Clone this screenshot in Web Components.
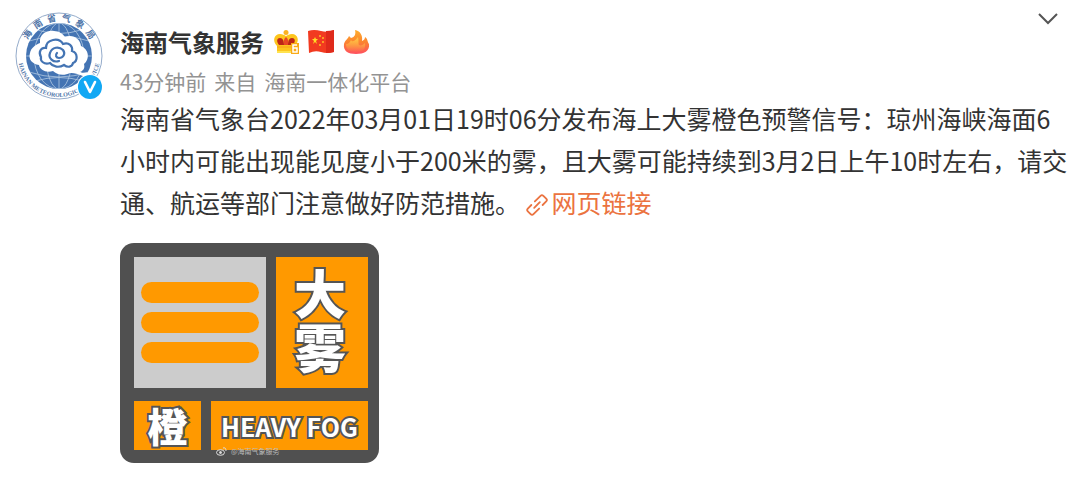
<!DOCTYPE html>
<html lang="zh-CN">
<head>
  <meta charset="utf-8">
  <meta name="viewport" content="width=device-width, initial-scale=1">
  <title>海南气象服务</title>
  <style>
    body {
      margin: 0;
      background: #fff;
      color: #333;
      font-family: "Noto Sans CJK SC", sans-serif;
    }
  </style>
</head>
<body>
  <feed-post>
    <user-avatar slot="avatar"></user-avatar>
    <post-header slot="header" name="海南气象服务" time="43分钟前" source="海南一体化平台"></post-header>
    海南省气象台2022年03月01日19时06分发布海上大雾橙色预警信号：琼州海峡海面6小时内可能出现能见度小于200米的雾，且大雾可能持续到3月2日上午10时左右，请交通、航运等部门注意做好防范措施。
    <web-link>网页链接</web-link>
    <fog-warning slot="media"></fog-warning>
  </feed-post>

  <script>
    class FeedPost extends HTMLElement {
      constructor() {
        super();
        this.attachShadow({ mode: 'open' });

        this.shadowRoot.innerHTML = `
          <style>
            :host {
              display: block;
            }

            article {
              display: grid;
              grid-template-columns: 88px minmax(0, 1fr);
              column-gap: 17px;
              padding: 12px 8px 20px 15px;
            }

            p {
              margin: 0 0 20px;
              font-size: 25px;
              line-height: 42px;
            }
          </style>

          <article>
            <slot name="avatar"></slot>
            <div>
              <slot name="header"></slot>
              <p><slot></slot></p>
              <slot name="media"></slot>
            </div>
          </article>
        `;
      }
    }

    class UserAvatar extends HTMLElement {
      constructor() {
        super();
        this.attachShadow({ mode: 'open' });

        this.shadowRoot.innerHTML = `
          <style>
            :host {
              display: block;
              position: relative;
              width: 88px;
              height: 88px;
            }

            svg {
              display: block;
              overflow: visible;
            }

            .verified {
              position: absolute;
              right: 0;
              bottom: 0;
            }

            text {
              fill: #4f75a8;
              font-weight: 700;
            }

            .cn {
              font-size: 9px;
            }

            .en {
              font-family: "Liberation Serif", serif;
              font-size: 6px;
            }
          </style>

          <svg width="88" height="88" viewBox="0 0 88 88" role="img" aria-label="海南省气象局">
            <defs>
              <path id="top" d="M9 44A35 35 0 0 1 79 44"/>
              <path id="bottom" d="M3 44A41 41 0 0 0 85 44"/>
              <clipPath id="disc"><circle cx="44" cy="44" r="33"/></clipPath>
            </defs>
            <circle cx="44" cy="44" r="43" fill="#fff" stroke="#7896bd" stroke-width=".8"/>
            <circle cx="44" cy="44" r="33" fill="#4474b3"/>
            <g clip-path="url(#disc)" fill="none" stroke="#b4cae2" stroke-width=".8">
              <path d="M44 10v68M10 44h68M14 29q30-10 60 0M14 60q30 10 60 0M22 18q22 7 44 0M20 69q24-7 48 0"/>
              <ellipse cx="44" cy="44" rx="13" ry="33"/>
              <ellipse cx="44" cy="44" rx="25" ry="33"/>
            </g>
            <path fill="#fff" d="M25 31C24 22 32 18 39 19c5 0 9 3 11 6 7-3 15 1 16 9 8 3 9 13 3 18 1 4 0 6-4 8 5 2 10 0 18-2l-3 8c-12 0-18-6-25-5-6 3-13 2-17-2-7 2-13-1-14-6-7-1-11-6-9-12 1-5 5-8 10-10Z"/>
            <g fill="none" stroke="#4474b3" stroke-width="2.200" stroke-linecap="round">
              <path d="M49 53c-5 3-11 2-14-2-6 2-10-2-9-6-3-5 0-10 5-9 0-9 13-11 17-4 6-2 10 2 9 7 6 2 6 10 1 12-1 4-5 5-9 2"/>
              <path d="M44 49c-6 2-11-3-9-8 2-6 9-7 13-3 3 4 0 8-4 8-3 0-4-3-2-5"/>
            </g>
            <text class="cn"><textPath href="#top" startOffset="50%" text-anchor="middle">海&ensp;南&ensp;省&ensp;气&ensp;象&ensp;局</textPath></text>
            <text class="en"><textPath href="#bottom" startOffset="50%" text-anchor="middle">HAINAN METEOROLOGICAL SERVICE</textPath></text>
          </svg>
          <svg class="verified" width="26" height="26" viewBox="0 0 26 26" role="img" aria-label="认证">
            <circle cx="13" cy="13" r="13" fill="#fff"/>
            <circle cx="13" cy="13" r="12" fill="#12a8f4"/>
            <path d="m8 8 5 10 5-10" fill="none" stroke="#fff" stroke-width="2.600" stroke-linecap="round" stroke-linejoin="round"/>
          </svg>
        `;
      }
    }

    class PostHeader extends HTMLElement {
      constructor() {
        super();
        this.attachShadow({ mode: 'open' });

        this.shadowRoot.innerHTML = `
          <style>
            :host {
              display: flex;
              justify-content: space-between;
              align-items: flex-start;
            }

            .info {
              padding-top: 14px;
            }

            .name {
              display: flex;
              align-items: center;
              gap: 8px;
              margin-bottom: 7px;
              font-size: 24px;
              font-weight: 700;
              line-height: 32px;
            }

            .meta {
              display: flex;
              gap: 8px;
              color: #939393;
              font-size: 21px;
              line-height: 32px;
            }

            a {
              color: inherit;
              text-decoration: none;
            }

            .source {
              display: flex;
              gap: 8px;
            }

            button {
              display: block;
              border: 0;
              padding: 0 12px;
              background: none;
              cursor: pointer;
            }

            svg {
              display: block;
            }
          </style>

          <div class="info">
            <div class="name">
              <a href="#" class="user"></a>
              <svg width="28" height="26" viewBox="0 0 28 26" aria-hidden="true">
                <circle cx="14" cy="3.500" r="2.500" fill="#fbb321"/>
                <path d="M5 17C0 12 2 5 8 5c3 0 4 1 6 2 2-1 3-2 6-2 6 0 8 7 3 12v7H5Z" fill="#fdc51d"/>
                <path d="M7 16C4 12 5 9 8 9c3 0 4 3 4 7Zm14 0c3-4 2-7-1-7-3 0-4 3-4 7Z" fill="#bd2617"/>
                <path d="M12 16q-1-6 2-8 3 2 2 8Z" fill="#e84724"/>
                <path d="M5 17h18v2H5Z" fill="#fbb31b"/>
                <path d="M5 22h18v2H5Z" fill="#ffe34f"/>
                <path d="M19 14h8v11h-8Z" fill="#f9ab18"/>
                <path d="M25 16h-4v7h4v-4h-4" fill="none" stroke="#fff" stroke-width="1.500"/>
              </svg>
              <svg width="26" height="26" viewBox="0 0 26 26" aria-hidden="true">
                <path d="M0 2q6-2 13 0t13-1v22q-7 2-13 0T1 24Z" fill="#f23a20"/>
                <path d="M18 2q4 0 8-1v22q-4 1-8 1Z" fill="#df2a1b"/>
                <path d="m7 8 1 2h2l-2 2 1 3-2-2-2 2 1-3-2-2h2Z" fill="#ffdb24"/>
                <g fill="#ffbd24"><circle cx="12" cy="7" r="1"/><circle cx="15" cy="9" r="1"/><circle cx="15" cy="13" r="1"/><circle cx="12" cy="16" r="1"/></g>
              </svg>
              <svg width="28" height="26" viewBox="0 0 28 26" aria-hidden="true">
                <defs>
                  <linearGradient id="flame" x1="0" y1="0" x2="0" y2="1">
                    <stop stop-color="#ffae2d"/>
                    <stop offset=".5" stop-color="#fb8430"/>
                    <stop offset="1" stop-color="#ff5060"/>
                  </linearGradient>
                  <linearGradient id="glow" x1="0" y1="0" x2="0" y2="1">
                    <stop stop-color="#ffc84a"/>
                    <stop offset="1" stop-color="#ffc84a" stop-opacity="0"/>
                  </linearGradient>
                </defs>
                <path d="M13 1c5 1 8 5 7 11 2-1 3-2 3-4 3 2 2 4 4 7 1 7-5 10-13 10S1 22 2 15c1-4 4-5 5-8l2 2c4-1 5-4 4-8Z" fill="url(#flame)"/>
                <path d="M4 15c3 0 4-2 5-4 1 3 5 0 7-3 1 4 0 7 1 8 2 1 4 0 6-2 1 7-3 9-9 9s-10-2-10-8Z" fill="url(#glow)"/>
              </svg>
            </div>
            <div class="meta">
              <a href="#" class="time"></a>
              <span class="source"><span>来自</span><a href="#" class="platform"></a></span>
            </div>
          </div>
          <button type="button" aria-label="更多">
            <svg width="22" height="14" viewBox="0 0 22 14" aria-hidden="true">
              <path d="m2 2 9 9 9-9" fill="none" stroke="#555" stroke-width="2"/>
            </svg>
          </button>
        `;
      }

      connectedCallback() {
        this.shadowRoot.querySelector('.user').textContent = this.getAttribute('name');
        this.shadowRoot.querySelector('.time').textContent = this.getAttribute('time');
        this.shadowRoot.querySelector('.platform').textContent = this.getAttribute('source');
      }
    }

    class WebLink extends HTMLElement {
      constructor() {
        super();
        this.attachShadow({ mode: 'open' });

        this.shadowRoot.innerHTML = `
          <style>
            :host {
              display: inline;
            }

            a {
              color: #eb7340;
              text-decoration: none;
              white-space: nowrap;
            }

            svg {
              margin-right: 4px;
              vertical-align: -3px;
            }
          </style>

          <a href="#"><svg width="22" height="22" viewBox="0 0 22 22" fill="none" stroke="currentColor" stroke-width="1.800" stroke-linejoin="round" stroke-linecap="round" aria-hidden="true">
            <g transform="rotate(-45 11 11)">
              <path d="M12 7h8q2 0 2 2v4q0 2-2 2h-5"/>
              <path d="M10 15H2q-2 0-2-2V9q0-2 2-2h5"/>
              <path d="M7 11h8"/>
            </g>
          </svg><slot></slot></a>
        `;
      }
    }

    class FogWarning extends HTMLElement {
      constructor() {
        super();
        this.attachShadow({ mode: 'open' });

        this.shadowRoot.innerHTML = `
          <style>
            :host {
              display: block;
            }

            .sign {
              position: relative;
              display: inline-flex;
              flex-direction: column;
              gap: 13px;
              padding: 14px 11px 13px 14px;
              border-radius: 14px;
              background: #505050;
              color: #fff;
              font-weight: 900;
              -webkit-text-stroke: 4px #555;
              paint-order: stroke fill;
              vertical-align: top;
            }

            .row {
              display: flex;
              gap: 10px;
            }

            .symbol {
              display: flex;
              flex-direction: column;
              justify-content: center;
              gap: 9px;
              width: 118px;
              height: 131px;
              padding: 0 7px;
              background: #ccc;
            }

            .symbol i {
              height: 21px;
              border-radius: 11px;
              background: #ff9900;
            }

            .panel {
              display: flex;
              flex-direction: column;
              align-items: center;
              justify-content: center;
              background: #ff9900;
            }

            .type {
              flex: 1;
              box-sizing: border-box;
              padding: 0 4px 8px 0;
              font-size: 52px;
              line-height: 54px;
            }

            .level {
              width: 67px;
              height: 49px;
              font-size: 40px;
              line-height: 49px;
            }

            .english {
              width: 157px;
              font-size: 25px;
              font-weight: 700;
              white-space: nowrap;
            }

            .mark {
              position: absolute;
              left: 96px;
              bottom: 6px;
              display: flex;
              align-items: center;
              gap: 4px;
              color: #bbb;
              font-size: 7px;
              font-weight: 400;
              line-height: 12px;
              -webkit-text-stroke: 0;
            }
          </style>

          <div class="sign">
            <div class="row">
              <div class="symbol"><i></i><i></i><i></i></div>
              <div class="panel type"><span>大</span><span>雾</span></div>
            </div>
            <div class="row">
              <div class="panel level">橙</div>
              <div class="panel english">HEAVY FOG</div>
            </div>
            <div class="mark">
              <svg width="11" height="9" viewBox="0 0 11 9" fill="none" stroke="#ddd" aria-hidden="true">
                <ellipse cx="4.500" cy="5.500" rx="4" ry="2.800"/>
                <circle cx="4.500" cy="5.500" r="1" fill="#ddd"/>
                <path d="M7 1q3-1 3 3"/>
              </svg>
              <span>@海南气象服务</span>
            </div>
          </div>
        `;
      }
    }

    customElements.define('feed-post', FeedPost);
    customElements.define('user-avatar', UserAvatar);
    customElements.define('post-header', PostHeader);
    customElements.define('web-link', WebLink);
    customElements.define('fog-warning', FogWarning);
  </script>
</body>
</html>
